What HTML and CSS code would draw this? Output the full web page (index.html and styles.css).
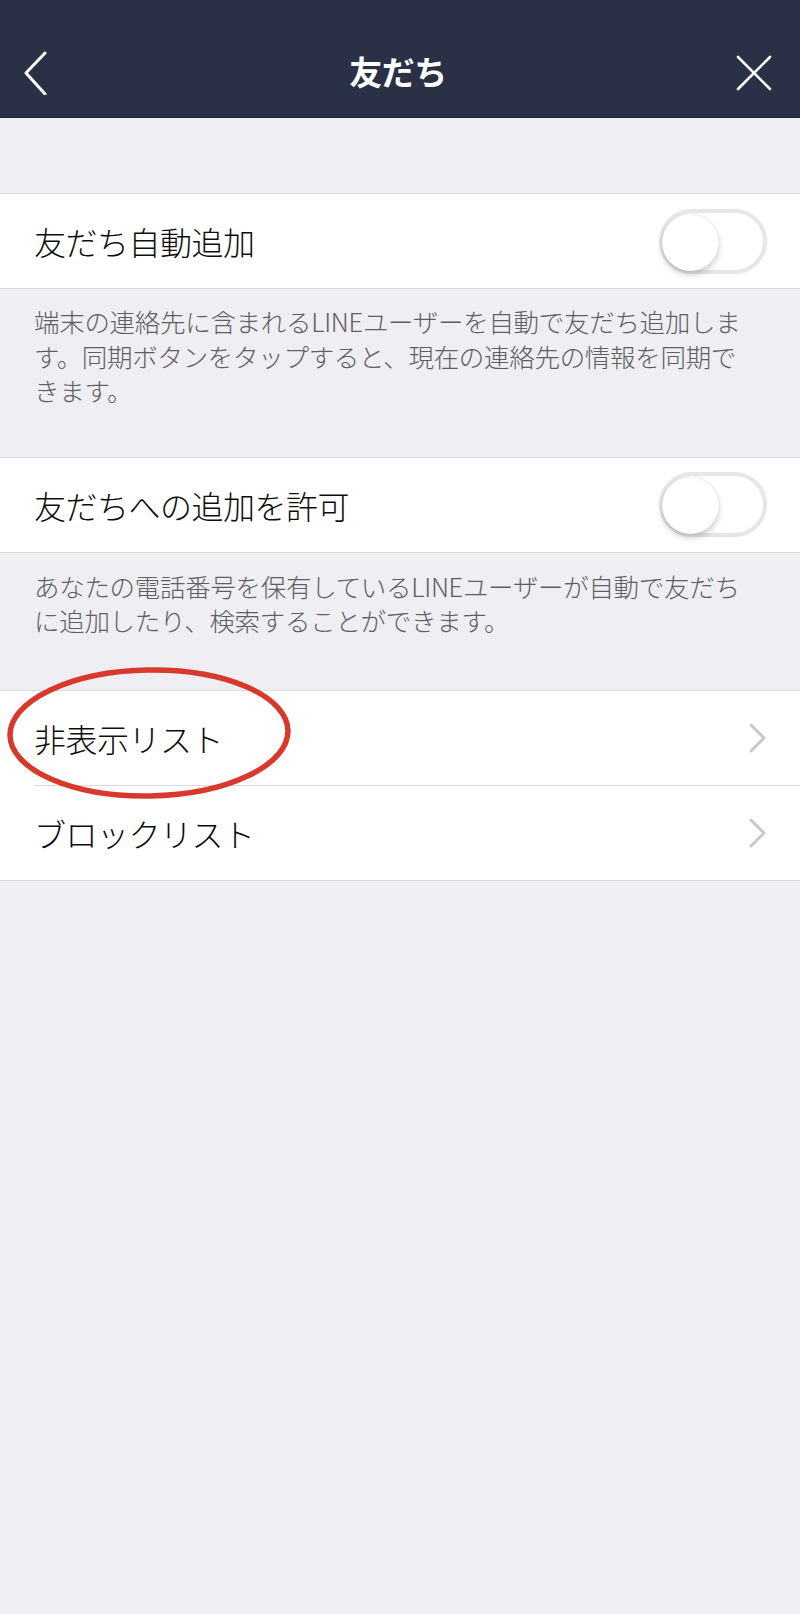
FILE: index.html
```html
<!DOCTYPE html>
<html lang="ja">
<head>
<meta charset="utf-8">
<title>友だち</title>
<link rel="stylesheet" href="styles.css">
</head>
<body>
<header class="nav">
  <div class="nav-left">
    <svg class="icon-back" width="24" height="44" viewBox="0 0 24 44"><polyline points="21,2 2,22 21,43" fill="none" stroke="#ffffff" stroke-width="3" stroke-linecap="round" stroke-linejoin="round"/></svg>
  </div>
  <h1 class="nav-title">友だち</h1>
  <div class="nav-right">
    <svg class="icon-close" width="36" height="36" viewBox="0 0 36 36"><path d="M2 2 L34 34 M34 2 L2 34" fill="none" stroke="#ffffff" stroke-width="2.6" stroke-linecap="round"/></svg>
  </div>
</header>

<main class="content">
  <div class="spacer"></div>

  <section class="group">
    <div class="row">
      <span class="row-label">友だち自動追加</span>
      <span class="toggle"><span class="knob"></span></span>
    </div>
  </section>
  <p class="note note-1">端末の連絡先に含まれるLINEユーザーを自動で友だち追加しま<br>す。同期ボタンをタップすると、現在の連絡先の情報を同期で<br>きます。</p>

  <section class="group">
    <div class="row">
      <span class="row-label">友だちへの追加を許可</span>
      <span class="toggle"><span class="knob"></span></span>
    </div>
  </section>
  <p class="note note-2">あなたの電話番号を保有しているLINEユーザーが自動で友だち<br>に追加したり、検索することができます。</p>

  <section class="group group-list">
    <div class="row row-link">
      <span class="row-label">非表示リスト</span>
      <svg class="chev" width="20" height="32" viewBox="0 0 20 32"><polyline points="3,3 16,16 3,29" fill="none" stroke="#c7c7cc" stroke-width="3" stroke-linecap="round" stroke-linejoin="round"/></svg>
      <svg class="circle-mark" width="290" height="140" viewBox="0 0 290 140"><ellipse cx="145" cy="70" rx="139" ry="63" fill="none" stroke="#d8392d" stroke-width="5.5" transform="rotate(-1 145 70)"/></svg>
    </div>
    <div class="divider"></div>
    <div class="row row-link">
      <span class="row-label">ブロックリスト</span>
      <svg class="chev" width="20" height="32" viewBox="0 0 20 32"><polyline points="3,3 16,16 3,29" fill="none" stroke="#c7c7cc" stroke-width="3" stroke-linecap="round" stroke-linejoin="round"/></svg>
    </div>
  </section>
</main>
</body>
</html>
```

FILE: styles.css
```css
* { box-sizing: border-box; }

html, body {
  margin: 0;
  padding: 0;
}

body {
  width: 800px;
  min-height: 1614px;
  background: #efeef3;
  font-family: "Noto Sans CJK JP", "Noto Sans", sans-serif;
  color: #111111;
}

.nav {
  height: 118px;
  background: #2a3147;
  border-bottom: 1px solid #22273a;
  display: grid;
  grid-template-columns: 1fr auto 1fr;
  align-items: center;
  padding: 24px 28px 0 24px;
}

.nav-left {
  display: flex;
  align-items: center;
  padding-top: 4px;
}

.nav-right {
  display: flex;
  justify-content: flex-end;
  align-items: center;
  padding-top: 4px;
}

.nav-title {
  margin: 0;
  color: #ffffff;
  font-size: 33px;
  font-weight: 700;
  line-height: 1;
  padding-top: 2px;
  letter-spacing: -0.5px;
}

.icon-back, .icon-close { display: block; }

.spacer { height: 75px; }

.group {
  background: #ffffff;
  border-top: 1px solid #d9d9de;
  border-bottom: 1px solid #d9d9de;
}

.row {
  height: 94px;
  display: flex;
  align-items: center;
  justify-content: space-between;
  padding: 0 34px 0 34px;
  position: relative;
}

.row-label {
  font-size: 32px;
  font-weight: 300;
  color: #0d0d0d;
  line-height: 1;
  letter-spacing: -0.5px;
}

.toggle {
  width: 108px;
  height: 65px;
  border-radius: 33px;
  border: 4px solid #e6e6ea;
  background: #ffffff;
  margin-right: -1px;
  position: relative;
  display: block;
}

.knob {
  position: absolute;
  left: -1px;
  top: 1px;
  width: 57px;
  height: 57px;
  border-radius: 50%;
  background: #ffffff;
  box-shadow: 0 4px 6px rgba(0,0,0,0.18), 0 0 1px rgba(0,0,0,0.25);
}

.note {
  margin: 0;
  padding: 0 30px 0 34px;
  font-size: 25.5px;
  font-weight: 300;
  line-height: 34.5px;
  color: #5e5e63;
  white-space: nowrap;
  letter-spacing: -0.3px;
}

.note-1 {
  padding-top: 15px;
  padding-bottom: 49px;
}

.note-2 {
  padding-top: 16px;
  padding-bottom: 52px;
}

.row-link { padding-right: 32px; }

.chev { display: block; }

.divider {
  height: 1px;
  margin-left: 34px;
  background: #d9d9de;
}

.circle-mark {
  position: absolute;
  left: 4px;
  top: -28px;
  pointer-events: none;
}
```
